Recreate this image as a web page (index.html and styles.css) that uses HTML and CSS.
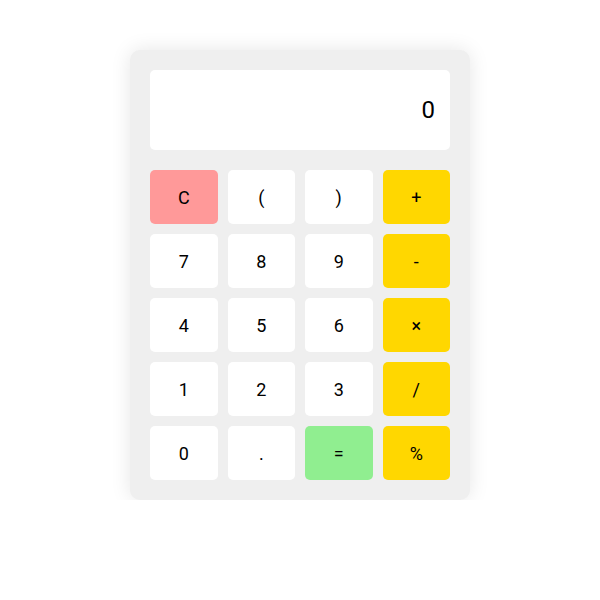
FILE: index.html
```html
<!DOCTYPE html>
<html>
<head>
    <title>Calculator</title>
    <link rel="stylesheet" href="styles.css">
</head>
<body>
    <div class="calculator">
        <div class="display" id="display">0</div>

        <div class="keys">
            <button class="key clear">C</button>
            <button class="key">(</button>
            <button class="key">)</button>
            <button class="key op">+</button>

            <button class="key">7</button>
            <button class="key">8</button>
            <button class="key">9</button>
            <button class="key op">-</button>

            <button class="key">4</button>
            <button class="key">5</button>
            <button class="key">6</button>
            <button class="key op">×</button>

            <button class="key">1</button>
            <button class="key">2</button>
            <button class="key">3</button>
            <button class="key op">/</button>

            <button class="key">0</button>
            <button class="key">.</button>
            <button class="key equals">=</button>
            <button class="key op">%</button>
        </div>
    </div>
</body>
</html>
```

FILE: styles.css
```css
body {
    font-family: Roboto, "Liberation Sans", sans-serif;
    margin: 0;
    padding-top: 50px;
    display: flex;
    justify-content: center;
}
.calculator {
    width: 300px;
    padding: 20px;
    background-color: #efefef;
    border-radius: 10px;
    box-shadow: 0 0 20px rgba(0, 0, 0, 0.1);
}
.display {
    height: 80px;
    margin-bottom: 20px;
    padding: 0 15px;
    background-color: #fff;
    border-radius: 5px;
    font-size: 24px;
    display: flex;
    align-items: center;
    justify-content: flex-end;
}
.keys {
    display: grid;
    grid-template-columns: repeat(4, 1fr);
    grid-auto-rows: 54px;
    gap: 10px;
}
.key {
    border: none;
    border-radius: 5px;
    background-color: #fff;
    font-family: inherit;
    font-size: 18px;
    color: #000;
    cursor: pointer;
}
.clear {
    background-color: #ff9999;
}
.op {
    background-color: #ffd700;
}
.equals {
    background-color: #90ee90;
}
```
